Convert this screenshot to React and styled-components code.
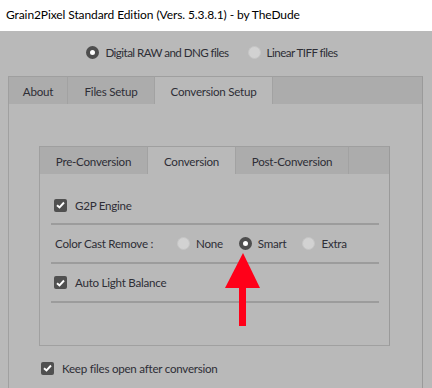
import React from 'react';
import styled, { createGlobalStyle } from 'styled-components';

const GlobalStyle = createGlobalStyle`
  html, body {
    margin: 0;
    padding: 0;
    width: 432px;
    height: 388px;
    overflow: hidden;
    background: #b9b9b9;
  }
  * { box-sizing: border-box; }
`;

const Window = styled.div`
  position: relative;
  width: 432px;
  height: 388px;
  font-family: Lato, "Noto Sans", sans-serif;
  font-size: 11.6px;
  letter-spacing: -0.25px;
  color: #2e2e36;
  background: #b9b9b9;
  overflow: hidden;
`;

const TitleBar = styled.div`
  height: 31px;
  background: #fff;
  color: #000;
  font-size: 12px;
  letter-spacing: -0.1px;
  display: flex;
  align-items: center;
  padding-left: 6px;
  padding-bottom: 2px;
`;

const SourceRow = styled.div`
  height: 45px;
  display: flex;
  align-items: center;
  justify-content: center;
  gap: 19px;
  letter-spacing: -0.55px;
  padding-right: 8px;
  padding-bottom: 2px;
`;

const Option = styled.label`
  display: flex;
  align-items: center;
  gap: 6px;
  white-space: nowrap;
`;

const Radio = styled.span`
  width: 13px;
  height: 13px;
  border-radius: 50%;
  flex: none;
  background: ${(p) => (p.checked ? '#fff' : '#d2d2d2')};
  border: ${(p) => (p.checked ? '4px solid #4e4e4e' : '1px solid #c6c6c6')};
`;

const Check = styled.span`
  width: 13px;
  height: 13px;
  border-radius: 2px;
  background: #505050;
  flex: none;
  display: flex;
  align-items: center;
  justify-content: center;
`;

const TabWidget = styled.div`
  margin: ${(p) => p.margin};
  width: ${(p) => p.width}px;
`;

const TabBar = styled.div`
  display: flex;
  height: 28px;
`;

const Tab = styled.div`
  width: ${(p) => p.w}px;
  flex: ${(p) => (p.fill ? '1' : 'none')};
  display: flex;
  align-items: center;
  justify-content: center;
  padding-top: 1px;
  background: ${(p) => (p.active ? '#b9b9b9' : '#acacac')};
  border-top: 1px solid #9f9f9f;
  border-left: ${(p) => (p.first ? '1px solid #9f9f9f' : 'none')};
  border-right: 1px solid ${(p) => (p.fill ? '#9a9a9a' : '#a2a2a2')};
  white-space: nowrap;
`;

const Panel = styled.div`
  height: ${(p) => p.h}px;
  border-left: 1px solid #a0a0a0;
  border-right: 1px solid #9a9a9a;
  border-bottom: ${(p) => (p.closed ? '1px solid #a0a0a0' : 'none')};
  padding: ${(p) => p.pad};
  display: flex;
  flex-direction: column;
`;

const Row = styled.div`
  height: ${(p) => p.h}px;
  display: flex;
  align-items: center;
  gap: 8px;
  padding-left: ${(p) => p.indent}px;
  padding-top: ${(p) => p.top || 0}px;
`;

const Separator = styled.div`
  height: 2px;
  background: #9c9c9c;
  margin: 0 10px 0 11px;
`;

const RowLabel = styled.span`
  width: 114px;
  flex: none;
`;

const CastOptions = styled.div`
  display: flex;
  align-items: center;
  gap: 16px;
`;

const Arrow = styled.svg`
  position: absolute;
  left: 224px;
  top: 252px;
`;

const CheckMark = () => (
  <svg width="9" height="8" viewBox="0 0 9 8">
    <path d="M1 4.2 L3.5 6.5 L8 1.5" stroke="#fff" strokeWidth="1.9" fill="none" />
  </svg>
);

export default function App() {
  return (
    <Window>
      <GlobalStyle />
      <TitleBar>Grain2Pixel Standard Edition (Vers. 5.3.8.1) - by TheDude</TitleBar>
      <SourceRow>
        <Option><Radio checked />Digital RAW and DNG files</Option>
        <Option><Radio />Linear TIFF files</Option>
      </SourceRow>
      <TabWidget margin="0 0 0 8px" width={415}>
        <TabBar>
          <Tab first w={60}>About</Tab>
          <Tab w={87}>Files Setup</Tab>
          <Tab active w={118}>Conversion Setup</Tab>
          <Tab fill />
        </TabBar>
        <Panel h={290} pad="42px 0 0 30px">
          <TabWidget width={351}>
            <TabBar>
              <Tab first w={109}>Pre-Conversion</Tab>
              <Tab active w={88}>Conversion</Tab>
              <Tab w={113}>Post-Conversion</Tab>
              <Tab fill />
            </TabBar>
            <Panel closed h={172} pad="0">
              <Row h={49} indent={14} top={13}>
                <Check><CheckMark /></Check>G2P Engine
              </Row>
              <Separator />
              <Row h={37} indent={15}>
                <RowLabel>Color Cast Remove :</RowLabel>
                <CastOptions>
                  <Option><Radio />None</Option>
                  <Option><Radio checked />Smart</Option>
                  <Option><Radio />Extra</Option>
                </CastOptions>
              </Row>
              <Separator />
              <Row h={37} indent={14}>
                <Check><CheckMark /></Check>Auto Light Balance
              </Row>
              <Separator />
            </Panel>
          </TabWidget>
          <Row h={44} indent={2}>
            <Check><CheckMark /></Check>Keep files open after conversion
          </Row>
        </Panel>
      </TabWidget>
      <Arrow width="38" height="76" viewBox="0 0 38 76">
        <polygon points="19,1 1,36 36,36" fill="#ff0019" />
        <rect x="15" y="35" width="7" height="39" fill="#ff0019" />
      </Arrow>
    </Window>
  );
}
